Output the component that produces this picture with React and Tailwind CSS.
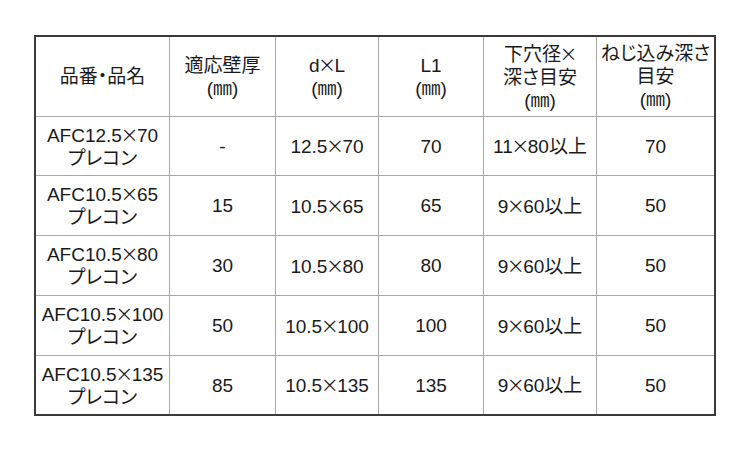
import React from "react";

const cols = [
  ["品番・品名"],
  ["適応壁厚", "(㎜)"],
  ["d×L", "(㎜)"],
  ["L1", "(㎜)"],
  ["下穴径×", "深さ目安", "(㎜)"],
  ["ねじ込み深さ", "目安", "(㎜)"],
];

const rows = [
  [["AFC12.5×70", "プレコン"], "-", "12.5×70", "70", "11×80以上", "70"],
  [["AFC10.5×65", "プレコン"], "15", "10.5×65", "65", "9×60以上", "50"],
  [["AFC10.5×80", "プレコン"], "30", "10.5×80", "80", "9×60以上", "50"],
  [["AFC10.5×100", "プレコン"], "50", "10.5×100", "100", "9×60以上", "50"],
  [["AFC10.5×135", "プレコン"], "85", "10.5×135", "135", "9×60以上", "50"],
];

function Text({ s }) {
  const parts = s.split("×");
  return parts.map((p, i) => (
    <React.Fragment key={i}>
      {i > 0 && (
        <span
          className="-mx-[1.5px] text-[18px] [font-feature-settings:normal]"
          style={{ fontFamily: '"Noto Sans CJK JP", sans-serif' }}
        >
          ×
        </span>
      )}
      {p}
    </React.Fragment>
  ));
}

function Cell({ lines }) {
  const arr = Array.isArray(lines) ? lines : [lines];
  return (
    <div className="bg-white flex flex-col items-center justify-center text-center leading-[23px]">
      {arr.map((l, i) => (
        <div key={i} className="whitespace-nowrap">
          <Text s={l} />
        </div>
      ))}
    </div>
  );
}

export default function App() {
  return (
    <div
      className="w-[750px] h-[450px] bg-white pt-[35px] pl-[34px] text-[19px] text-[#1a1a1a] [font-feature-settings:'palt']"
      style={{ fontFamily: '"Liberation Sans", "Noto Sans CJK JP", sans-serif' }}
    >
      <div className="w-[682px] border-2 border-[#3a3a3a]">
        <div className="grid gap-px bg-[#a8a8a8] grid-cols-[133px_105px_102px_104px_112px_117px] grid-rows-[79px_58px_59px_59px_59px_58px]">
          {cols.map((c, i) => (
            <Cell key={"h" + i} lines={c} />
          ))}
          {rows.map((r, ri) =>
            r.map((c, ci) => <Cell key={ri + "-" + ci} lines={c} />)
          )}
        </div>
      </div>
    </div>
  );
}
